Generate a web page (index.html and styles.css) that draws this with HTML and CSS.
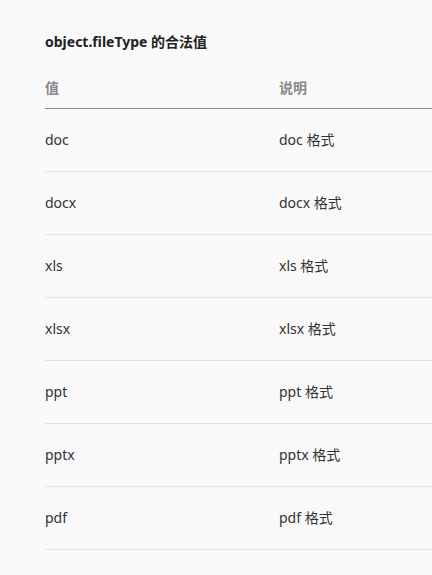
FILE: index.html
```html
<!DOCTYPE html>
<html lang="zh">
<head>
<meta charset="utf-8">
<link rel="stylesheet" href="styles.css">
</head>
<body>
<div class="page">
  <h3 class="title">object.fileType 的合法值</h3>
  <table class="values">
    <thead>
      <tr><th class="col-val">值</th><th>说明</th></tr>
    </thead>
    <tbody>
      <tr><td>doc</td><td>doc 格式</td></tr>
      <tr><td>docx</td><td>docx 格式</td></tr>
      <tr><td>xls</td><td>xls 格式</td></tr>
      <tr><td>xlsx</td><td>xlsx 格式</td></tr>
      <tr><td>ppt</td><td>ppt 格式</td></tr>
      <tr><td>pptx</td><td>pptx 格式</td></tr>
      <tr><td>pdf</td><td>pdf 格式</td></tr>
    </tbody>
  </table>
</div>
</body>
</html>
```
FILE: styles.css
```css
html, body {
  margin: 0;
  padding: 0;
  background: #f9f9f9;
  overflow: hidden;
}
.page {
  padding: 33px 0 0 45px;
  font-family: "Noto Sans", "Noto Sans CJK SC", sans-serif;
  color: #333;
}
.title {
  margin: 0;
  font-size: 14px;
  line-height: 18px;
  font-weight: 700;
  color: #222;
}
.values {
  width: 100%;
  border-collapse: collapse;
  margin-top: 28px;
  font-size: 14px;
}
.values th {
  text-align: left;
  font-weight: 700;
  color: #888;
  padding: 0 0 11px 0;
  line-height: 18px;
  border-bottom: 1px solid #8a8a8a;
}
.values .col-val { width: 234px; }
.values td {
  padding: 0;
  height: 62px;
  line-height: 18px;
  vertical-align: middle;
  border-bottom: 1px solid #e3e3e3;
}
```
